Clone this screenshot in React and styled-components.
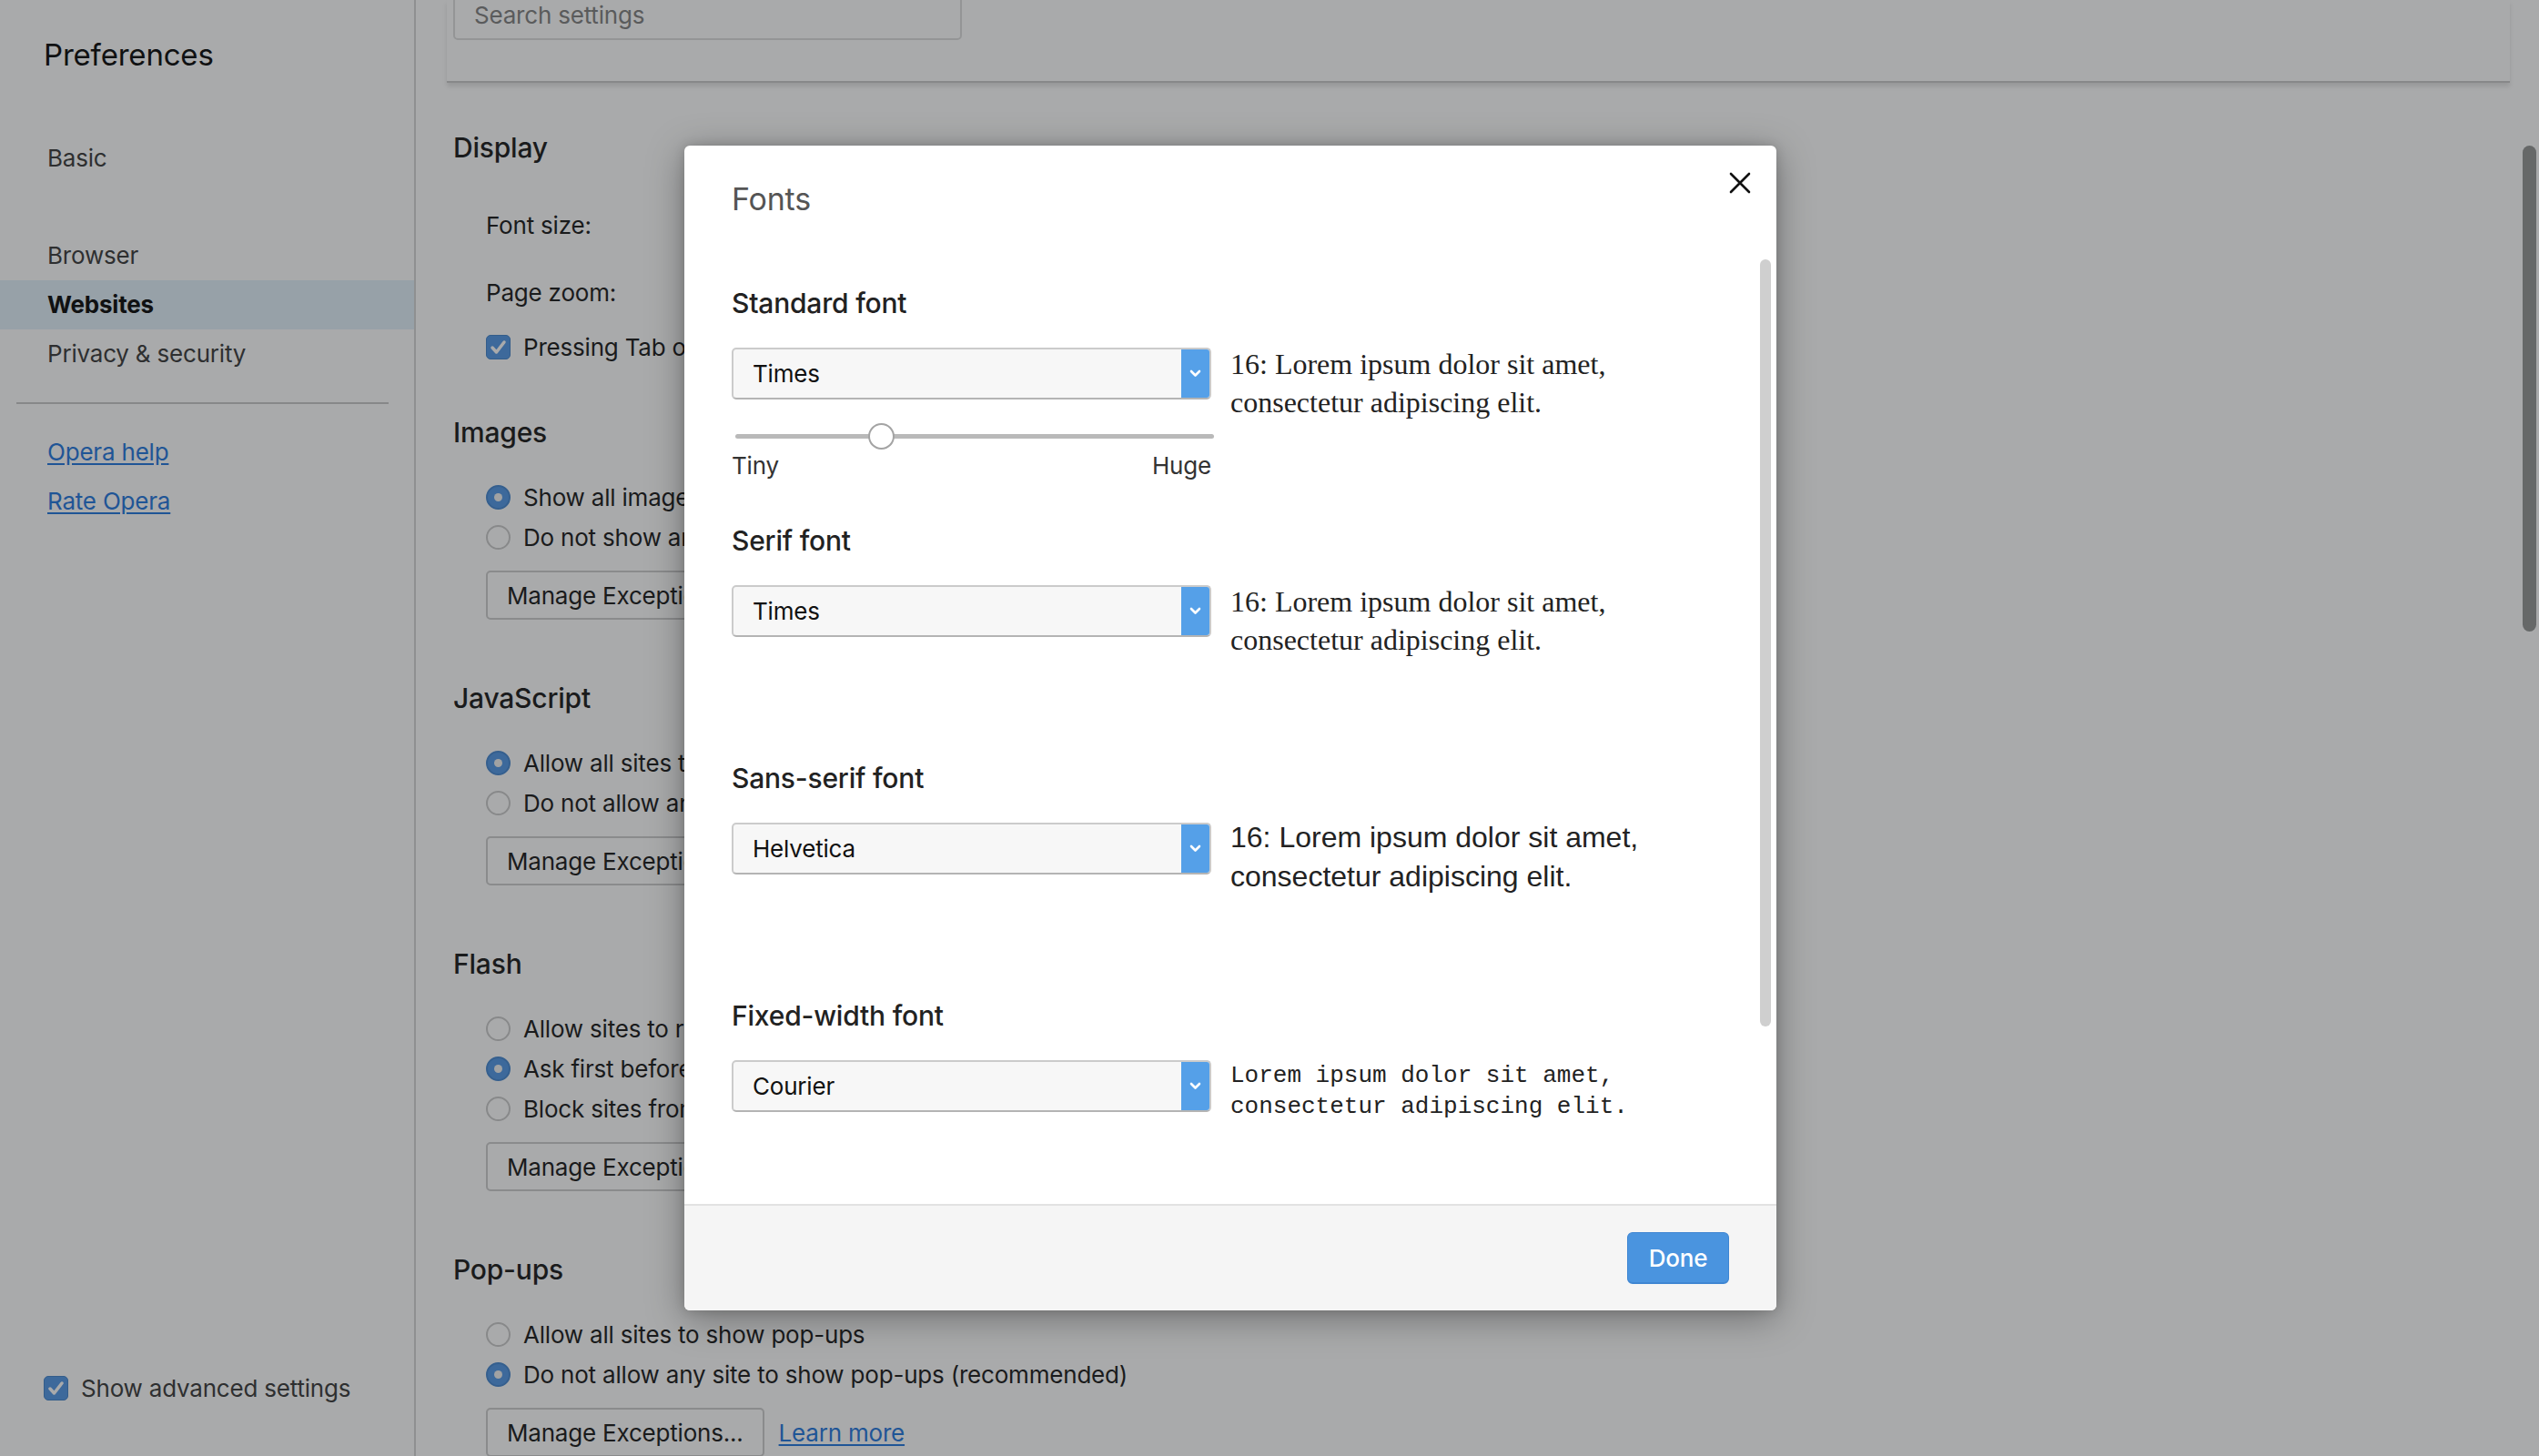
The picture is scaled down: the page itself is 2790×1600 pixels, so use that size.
import styled, { createGlobalStyle } from "styled-components"

const GlobalStyle = createGlobalStyle`
  html, body {
    margin: 0;
    padding: 0;
  }
  body {
    font-family: Inter, "Liberation Sans", sans-serif;
    letter-spacing: -0.2px;
    color: #222;
    background: #fff;
  }
  * {
    box-sizing: border-box;
  }
`

const Check = () => (
    <svg width="27" height="27" viewBox="0 0 27 27">
        <path d="M7 14 L11.5 19 L20 8" fill="none" stroke="#fff" strokeWidth="3.5" strokeLinecap="round" strokeLinejoin="round" />
    </svg>
)

const Chevron = () => (
    <svg width="13" height="9" viewBox="0 0 13 9">
        <path d="M2 2 L6.5 6.5 L11 2" fill="none" stroke="#fff" strokeWidth="2.6" strokeLinecap="round" strokeLinejoin="round" />
    </svg>
)

const CloseIcon = () => (
    <svg width="24" height="24" viewBox="0 0 24 24">
        <path d="M2 2 L22 22 M22 2 L2 22" stroke="#111" strokeWidth="2.6" strokeLinecap="round" />
    </svg>
)

const fonts = [
    { title: "Standard font", value: "Times", kind: "serif", slider: true },
    { title: "Serif font", value: "Times", kind: "serif" },
    { title: "Sans-serif font", value: "Helvetica", kind: "sans" },
    { title: "Fixed-width font", value: "Courier", kind: "mono" },
]

const FontSelect = ({ value }) => (
    <Select>
        <SelectText>{value}</SelectText>
        <SelectArrow>
            <Chevron />
        </SelectArrow>
    </Select>
)

const Option = ({ checked, children }) => (
    <OptionRow>
        <Radio $checked={checked} />
        {children}
    </OptionRow>
)

export default function App() {
    return (
        <>
            <GlobalStyle />
            <Page>
                <Sidebar>
                    <Title>Preferences</Title>
                    <Nav>
                        <NavItem>Basic</NavItem>
                        <NavItem $gap>Browser</NavItem>
                        <NavItem $active>Websites</NavItem>
                        <NavItem>Privacy &amp; security</NavItem>
                    </Nav>
                    <Divider />
                    <SideLink>Opera help</SideLink>
                    <SideLink>Rate Opera</SideLink>
                    <Spacer />
                    <AdvancedRow>
                        <CheckBox><Check /></CheckBox>
                        Show advanced settings
                    </AdvancedRow>
                </Sidebar>

                <Main>
                    <Content>
                        <Header>
                            <SearchBox>Search settings</SearchBox>
                        </Header>
                        <Sections>
                            <Section $space={52}>
                                <SectionTitle>Display</SectionTitle>
                                <Items>
                                    <LabelRow $h={73}>Font size:</LabelRow>
                                    <LabelRow $h={75}>Page zoom:</LabelRow>
                                    <OptionRow>
                                        <CheckBox><Check /></CheckBox>
                                        Pressing Tab on a webpage highlights links, as well as form fields
                                    </OptionRow>
                                </Items>
                            </Section>

                            <Section>
                                <SectionTitle>Images</SectionTitle>
                                <Items>
                                    <Option checked>Show all images (recommended)</Option>
                                    <Option>Do not show any images</Option>
                                    <ButtonRow>
                                        <Button>Manage Exceptions...</Button>
                                    </ButtonRow>
                                </Items>
                            </Section>

                            <Section>
                                <SectionTitle>JavaScript</SectionTitle>
                                <Items>
                                    <Option checked>Allow all sites to run JavaScript (recommended)</Option>
                                    <Option>Do not allow any site to run JavaScript</Option>
                                    <ButtonRow>
                                        <Button>Manage Exceptions...</Button>
                                    </ButtonRow>
                                </Items>
                            </Section>

                            <Section>
                                <SectionTitle>Flash</SectionTitle>
                                <Items>
                                    <Option>Allow sites to run Flash</Option>
                                    <Option checked>Ask first before allowing sites to run Flash (recommended)</Option>
                                    <Option>Block sites from running Flash</Option>
                                    <ButtonRow>
                                        <Button>Manage Exceptions...</Button>
                                    </ButtonRow>
                                </Items>
                            </Section>

                            <Section>
                                <SectionTitle>Pop-ups</SectionTitle>
                                <Items>
                                    <Option>Allow all sites to show pop-ups</Option>
                                    <Option checked>Do not allow any site to show pop-ups (recommended)</Option>
                                    <ButtonRow>
                                        <Button>Manage Exceptions...</Button>
                                        <InlineLink>Learn more</InlineLink>
                                    </ButtonRow>
                                </Items>
                            </Section>
                        </Sections>
                    </Content>
                    <PageScroll>
                        <PageThumb />
                    </PageScroll>
                </Main>

                <Backdrop>
                    <Modal>
                        <ModalHeader>
                            <ModalTitle>Fonts</ModalTitle>
                            <CloseButton><CloseIcon /></CloseButton>
                        </ModalHeader>
                        <ModalBody>
                            <BodyContent>
                                {fonts.map((f) => (
                                    <FontSection key={f.title}>
                                        <FontHeading>{f.title}</FontHeading>
                                        <FontRow>
                                            <SelectCol>
                                                <FontSelect value={f.value} />
                                                {f.slider && (
                                                    <>
                                                        <Slider>
                                                            <Track>
                                                                <Knob style={{ left: "30.5%" }} />
                                                            </Track>
                                                        </Slider>
                                                        <SliderLabels>
                                                            <span>Tiny</span>
                                                            <span>Huge</span>
                                                        </SliderLabels>
                                                    </>
                                                )}
                                            </SelectCol>
                                            <Preview $kind={f.kind}>
                                                {f.kind === "mono" ? "" : "16: "}Lorem ipsum dolor sit amet,
                                                <br />
                                                consectetur adipiscing elit.
                                            </Preview>
                                        </FontRow>
                                    </FontSection>
                                ))}
                            </BodyContent>
                            <BodyScroll>
                                <BodyThumb />
                            </BodyScroll>
                        </ModalBody>
                        <ModalFooter>
                            <DoneButton>Done</DoneButton>
                        </ModalFooter>
                    </Modal>
                </Backdrop>
            </Page>
        </>
    )
}

const Page = styled.div`
    position: relative;
    width: 2790px;
    height: 1600px;
    display: flex;
    overflow: hidden;
    background: #fff;
`

const Sidebar = styled.aside`
    width: 457px;
    flex-shrink: 0;
    display: flex;
    flex-direction: column;
    padding-top: 40px;
    border-right: 2px solid #d4d4d4;
`

const Title = styled.h1`
    margin: 0;
    padding-left: 48px;
    font-size: 33px;
    line-height: 40px;
    font-weight: 400;
    color: #000;
`

const Nav = styled.nav`
    margin-top: 67px;
    display: flex;
    flex-direction: column;
`

const NavItem = styled.div`
    height: 54px;
    line-height: 54px;
    padding-left: 52px;
    margin-top: ${(p) => (p.$gap ? "53px" : "0")};
    font-size: 26px;
    font-weight: ${(p) => (p.$active ? 700 : 400)};
    color: ${(p) => (p.$active ? "#000" : "#333")};
    background: ${(p) => (p.$active ? "#e2f0fb" : "transparent")};
`

const Divider = styled.div`
    height: 2px;
    margin: 26px 28px 26px 18px;
    background: #c6c6c6;
`

const SideLink = styled.a`
    display: block;
    height: 54px;
    line-height: 54px;
    padding-left: 52px;
    font-size: 26px;
    color: #1a72dc;
    text-decoration: underline;
    text-underline-offset: 3px;
`

const Spacer = styled.div`
    flex: 1;
`

const AdvancedRow = styled.div`
    display: flex;
    align-items: center;
    gap: 14px;
    height: 54px;
    padding-left: 48px;
    margin-bottom: 48px;
    font-size: 26px;
    color: #333;
`

const CheckBox = styled.span`
    width: 27px;
    height: 27px;
    flex-shrink: 0;
    display: flex;
    border-radius: 5px;
    background: #4b93e4;
    border: 1px solid #3d7fc9;
    align-items: center;
    justify-content: center;
    svg {
        margin: -1px;
    }
`

const Main = styled.main`
    flex: 1;
    min-width: 0;
    display: flex;
`

const Content = styled.div`
    flex: 1;
    min-width: 0;
    padding: 0 14px 0 34px;
`

const Header = styled.header`
    height: 91px;
    display: flex;
    align-items: flex-start;
    padding-left: 7px;
    border-bottom: 2px solid #c6c6c6;
    box-shadow: 0 4px 5px rgba(0, 0, 0, 0.12);
`

const SearchBox = styled.div`
    width: 559px;
    height: 56px;
    margin-top: -12px;
    padding-left: 21px;
    display: flex;
    align-items: center;
    border: 2px solid #dcdcdc;
    border-radius: 5px;
    font-size: 26px;
    color: #7c7c7c;
    background: #fff;
`

const Sections = styled.div`
    padding: 51px 0 0 7px;
`

const Section = styled.section`
    margin-bottom: ${(p) => p.$space ?? 66}px;
`

const SectionTitle = styled.h2`
    margin: 0 0 29px;
    font-size: 30px;
    line-height: 40px;
    font-weight: 500;
    color: #111;
`

const Items = styled.div`
    padding-left: 36px;
    display: flex;
    flex-direction: column;
`

const LabelRow = styled.div`
    height: ${(p) => p.$h}px;
    display: flex;
    align-items: center;
    font-size: 26px;
    color: #111;
`

const OptionRow = styled.div`
    height: 44px;
    display: flex;
    align-items: center;
    gap: 14px;
    font-size: 26px;
    color: #111;
    white-space: nowrap;
`

const Radio = styled.span`
    width: 27px;
    height: 27px;
    flex-shrink: 0;
    border-radius: 50%;
    display: flex;
    align-items: center;
    justify-content: center;
    border: 2px solid ${(p) => (p.$checked ? "#3e82cf" : "#c8c8c8")};
    background: ${(p) => (p.$checked ? "#4b93e4" : "#fff")};
    &::after {
        content: "";
        width: 9px;
        height: 9px;
        border-radius: 50%;
        background: ${(p) => (p.$checked ? "#f2f2f2" : "transparent")};
    }
`

const ButtonRow = styled.div`
    margin-top: 15px;
    display: flex;
    align-items: center;
    gap: 16px;
`

const Button = styled.button`
    height: 54px;
    padding: 0 21px;
    border: 2px solid #cbcbcb;
    border-radius: 5px;
    background: #fff;
    font-family: inherit;
    letter-spacing: inherit;
    font-size: 26px;
    color: #111;
`

const InlineLink = styled.a`
    font-size: 26px;
    color: #1a72dc;
    text-decoration: underline;
    text-underline-offset: 3px;
`

const PageScroll = styled.div`
    width: 18px;
    flex-shrink: 0;
    padding-top: 160px;
`

const PageThumb = styled.div`
    width: 15px;
    height: 534px;
    border-radius: 8px;
    background: #8f9190;
`

const Backdrop = styled.div`
    position: absolute;
    inset: 0;
    background: rgba(40, 42, 44, 0.4);
    padding: 160px 0 0 752px;
    display: flex;
    align-items: flex-start;
`

const Modal = styled.div`
    width: 1200px;
    height: 1280px;
    display: flex;
    flex-direction: column;
    background: #fff;
    border-radius: 6px;
    overflow: hidden;
    box-shadow: 0 8px 40px rgba(0, 0, 0, 0.35), 0 0 12px rgba(0, 0, 0, 0.15);
`

const ModalHeader = styled.div`
    height: 120px;
    flex-shrink: 0;
    display: flex;
    justify-content: space-between;
    align-items: flex-start;
    padding: 0 28px 0 52px;
`

const ModalTitle = styled.h3`
    margin: 39px 0 0;
    font-size: 34px;
    line-height: 40px;
    font-weight: 400;
    color: #555;
`

const CloseButton = styled.span`
    margin-top: 29px;
    display: flex;
`

const ModalBody = styled.div`
    flex: 1;
    min-height: 0;
    display: flex;
    overflow: hidden;
`

const BodyContent = styled.div`
    flex: 1;
    padding: 30px 0 0 52px;
`

const FontSection = styled.div`
    min-height: 261px;
`

const FontHeading = styled.h4`
    margin: 0 0 26px;
    font-size: 30px;
    line-height: 46px;
    font-weight: 500;
    color: #222;
`

const FontRow = styled.div`
    display: flex;
    align-items: flex-start;
    gap: 21px;
`

const SelectCol = styled.div`
    width: 527px;
    flex-shrink: 0;
`

const Select = styled.div`
    height: 57px;
    display: flex;
    border: 2px solid #cbcbcb;
    border-bottom-color: #b4b4b4;
    border-radius: 5px;
    background: #f7f7f7;
    overflow: hidden;
`

const SelectText = styled.div`
    flex: 1;
    display: flex;
    align-items: center;
    padding-left: 21px;
    font-size: 26px;
    color: #111;
`

const SelectArrow = styled.div`
    width: 31px;
    display: flex;
    align-items: center;
    justify-content: center;
    background: #55a0e8;
`

const Slider = styled.div`
    margin: 22px 0 0 4px;
    width: 526px;
    height: 36px;
    display: flex;
    align-items: center;
`

const Track = styled.div`
    position: relative;
    width: 100%;
    height: 5px;
    border-radius: 3px;
    background: #b9b9b9;
`

const Knob = styled.span`
    position: absolute;
    top: 50%;
    width: 29px;
    height: 29px;
    margin: -14.5px 0 0 -14.5px;
    border-radius: 50%;
    background: #fff;
    border: 2px solid #a4a4a4;
`

const SliderLabels = styled.div`
    display: flex;
    justify-content: space-between;
    font-size: 26px;
    line-height: 30px;
    color: #333;
`

const previewFonts = {
    serif: `font-family: "Liberation Serif", "DejaVu Serif", serif; font-size: 32px; line-height: 42px; margin-top: -3px;`,
    sans: `font-family: "Liberation Sans", Arial, sans-serif; font-size: 32px; line-height: 43px; margin-top: -5px;`,
    mono: `font-family: "Liberation Mono", "Courier New", monospace; font-size: 26px; line-height: 34px; margin-top: 0;`,
}

const Preview = styled.p`
    margin: 0;
    color: #222;
    letter-spacing: 0;
    white-space: nowrap;
    ${(p) => previewFonts[p.$kind]}
`

const BodyScroll = styled.div`
    width: 18px;
    flex-shrink: 0;
    padding-top: 5px;
`

const BodyThumb = styled.div`
    width: 12px;
    height: 843px;
    border-radius: 6px;
    background: #cfcfcf;
`

const ModalFooter = styled.div`
    height: 117px;
    flex-shrink: 0;
    display: flex;
    justify-content: flex-end;
    align-items: center;
    padding-right: 52px;
    border-top: 2px solid #e2e2e2;
    background: #f5f5f5;
`

const DoneButton = styled.button`
    width: 112px;
    height: 57px;
    border: 1px solid #3f86d2;
    border-bottom-width: 2px;
    border-radius: 6px;
    background: #4a94df;
    color: #fff;
    font-family: inherit;
    letter-spacing: inherit;
    font-size: 26px;
    font-weight: 500;
`
